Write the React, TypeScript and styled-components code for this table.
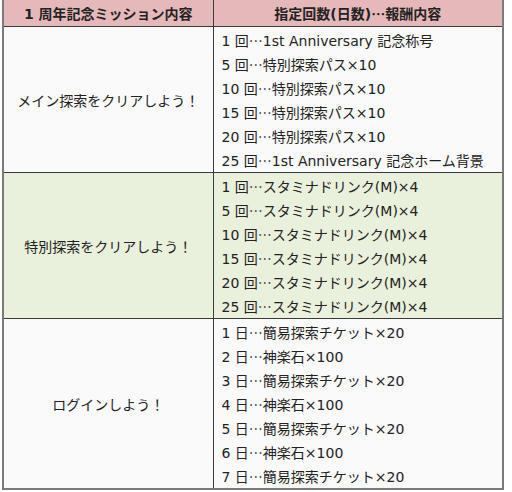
import React from "react";
import styled, { createGlobalStyle } from "styled-components";

const GlobalStyle = createGlobalStyle`
  html, body {
    margin: 0;
    padding: 0;
    background: #ffffff;
  }
  body {
    font-family: "DejaVu Sans", "Noto Sans CJK JP", sans-serif;
    color: #222;
  }
`;

interface Group {
  mission: string;
  rewards: string[];
  tint?: boolean;
}

const groups: Group[] = [
  {
    mission: "メイン探索をクリアしよう！",
    rewards: [
      "1 回…1st Anniversary 記念称号",
      "5 回…特別探索パス×10",
      "10 回…特別探索パス×10",
      "15 回…特別探索パス×10",
      "20 回…特別探索パス×10",
      "25 回…1st Anniversary 記念ホーム背景",
    ],
  },
  {
    mission: "特別探索をクリアしよう！",
    tint: true,
    rewards: [
      "1 回…スタミナドリンク(M)×4",
      "5 回…スタミナドリンク(M)×4",
      "10 回…スタミナドリンク(M)×4",
      "15 回…スタミナドリンク(M)×4",
      "20 回…スタミナドリンク(M)×4",
      "25 回…スタミナドリンク(M)×4",
    ],
  },
  {
    mission: "ログインしよう！",
    rewards: [
      "1 日…簡易探索チケット×20",
      "2 日…神楽石×100",
      "3 日…簡易探索チケット×20",
      "4 日…神楽石×100",
      "5 日…簡易探索チケット×20",
      "6 日…神楽石×100",
      "7 日…簡易探索チケット×20",
    ],
  },
];

const Wrapper = styled.div`
  padding: 0 3px 0 2px;
  width: 507px;
  box-sizing: border-box;
`;

const Table = styled.table`
  width: 100%;
  border-collapse: collapse;
  table-layout: fixed;
  border-left: 2px solid #7a7a7a;
  border-right: 2px solid #7a7a7a;
  border-bottom: 2px solid #7a7a7a;
  font-size: 14px;
`;

const HeadCell = styled.th`
  background: #e5b9ba;
  border: 1px solid #3a3a3a;
  border-top: none;
  height: 26px;
  padding: 0;
  font-weight: bold;
  text-align: center;
  color: #222;
`;

const MissionCell = styled.td<{ $tint?: boolean }>`
  background: ${(p) => (p.$tint ? "#e9f0dc" : "#fafafa")};
  border: 1px solid #3a3a3a;
  text-align: center;
  vertical-align: middle;
  padding: 0;
`;

const RewardCell = styled.td<{ $tint?: boolean }>`
  background: ${(p) => (p.$tint ? "#e9f0dc" : "#fafafa")};
  border: 1px solid #3a3a3a;
  padding: 1px 0 0 8px;
  vertical-align: top;
`;

const RewardLine = styled.div`
  height: 24px;
  line-height: 24px;
  white-space: nowrap;
`;

const Dots = styled.span`
  font-family: "Noto Sans CJK JP", sans-serif;
`;

function Reward({ text }: { text: string }) {
  const [count, prize] = text.split("…");
  return (
    <RewardLine>
      {count}
      <Dots>…</Dots>
      {prize}
    </RewardLine>
  );
}

export default function App() {
  return (
    <Wrapper>
      <GlobalStyle />
      <Table>
        <colgroup>
          <col style={{ width: 210 }} />
          <col />
        </colgroup>
        <thead>
          <tr>
            <HeadCell>1 周年記念ミッション内容</HeadCell>
            <HeadCell>
              指定回数(日数)<Dots>…</Dots>報酬内容
            </HeadCell>
          </tr>
        </thead>
        <tbody>
          {groups.map((g) => (
            <tr key={g.mission}>
              <MissionCell $tint={g.tint}>{g.mission}</MissionCell>
              <RewardCell $tint={g.tint}>
                {g.rewards.map((r) => (
                  <Reward key={r} text={r} />
                ))}
              </RewardCell>
            </tr>
          ))}
        </tbody>
      </Table>
    </Wrapper>
  );
}
